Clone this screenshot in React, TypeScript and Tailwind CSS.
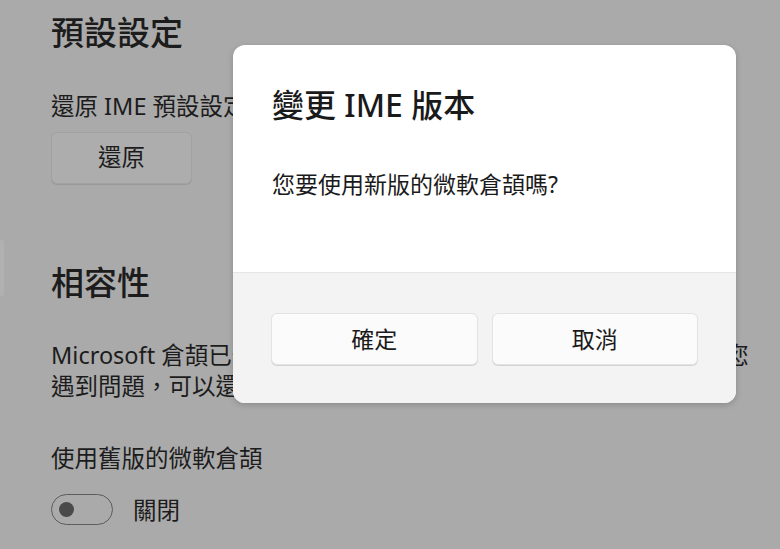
export default function App() {
  const font = { fontFamily: '"Noto Sans", "Noto Sans CJK TC", sans-serif' };
  return (
    <div className="relative h-[549px] w-[780px] overflow-hidden bg-[#aaaaaa] text-[#1c1c1c]" style={font}>
      {/* background settings page (dimmed) */}
      <div className="absolute left-0 top-[240px] h-[56px] w-[4px] rounded-r-[3px] bg-[#b1b1b1]" />
      <div className="flex flex-col pl-[51px] pt-[11px]">
        <h2 className="text-[33px] leading-[44px] font-medium">預設設定</h2>
        <p className="mt-[37px] text-[23.5px] leading-[28px]">還原 IME 預設設定</p>
        <button className="mt-[12px] h-[52px] w-[141px] rounded-[6px] border border-[#a2a2a2] bg-[#adadad] text-[23.5px] shadow-[0_1px_0_#9a9a9a]">
          還原
        </button>
        <h2 className="mt-[77px] text-[33px] leading-[44px] font-medium">相容性</h2>
        <div className="mt-[35px] text-[23.5px] leading-[31px] whitespace-nowrap">
          <p>Microsoft 倉頡已升級，提供更佳的輸入體驗與更多新功能。如果您</p>
          <p>遇到問題，可以還原為舊版的 IME。</p>
        </div>
        <p className="mt-[42px] text-[23.5px] leading-[28px]">使用舊版的微軟倉頡</p>
        <div className="mt-[22px] flex items-center gap-[20px]">
          <div className="flex h-[31px] w-[62px] items-center rounded-full border-[1.5px] border-[#5c5c5c] pl-[7px]">
            <div className="h-[15px] w-[15px] rounded-full bg-[#4a4a4a]" />
          </div>
          <span className="text-[23.5px] leading-[28px]">關閉</span>
        </div>
      </div>

      {/* dialog */}
      <div className="absolute left-[233px] top-[45px] flex h-[358px] w-[503px] flex-col overflow-hidden rounded-[12px] bg-white shadow-[0_2px_6px_rgba(0,0,0,0.18)]">
        <div className="flex h-[227px] flex-col px-[39px] pt-[40px]">
          <h1 className="text-[32px] leading-[40px] font-medium text-[#1a1a1a]">變更 IME 版本</h1>
          <p className="mt-[44px] text-[23px] leading-[30px] text-[#1a1a1a]">您要使用新版的微軟倉頡嗎?</p>
        </div>
        <div className="flex flex-1 gap-[14px] border-t border-[#e5e5e5] bg-[#f3f3f3] px-[38px] pt-[40px]">
          <button className="h-[52px] flex-1 rounded-[6px] border border-[#e3e3e3] bg-[#fbfbfb] text-[23px] text-[#1a1a1a] shadow-[0_1px_0_#d4d4d4]">
            確定
          </button>
          <button className="h-[52px] flex-1 rounded-[6px] border border-[#e3e3e3] bg-[#fbfbfb] text-[23px] text-[#1a1a1a] shadow-[0_1px_0_#d4d4d4]">
            取消
          </button>
        </div>
      </div>
    </div>
  );
}
